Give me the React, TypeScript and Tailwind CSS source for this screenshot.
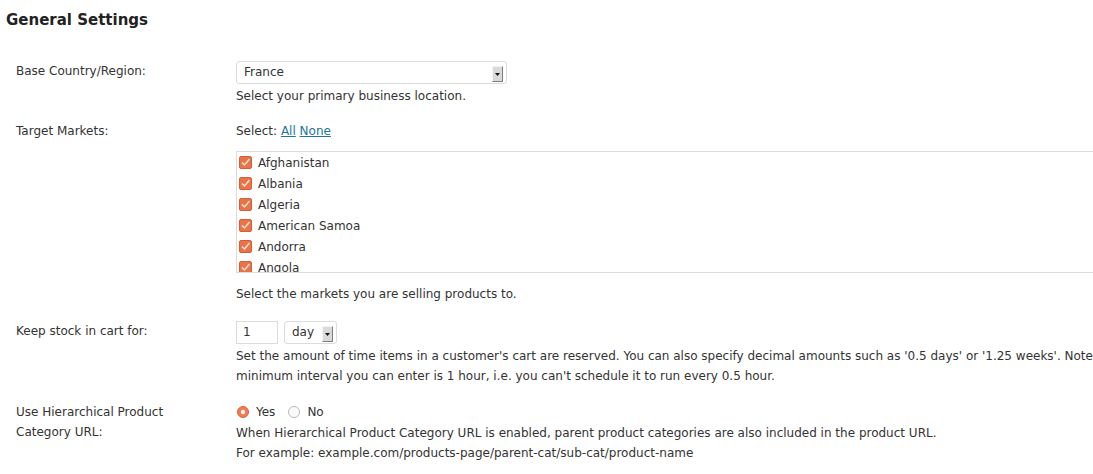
import React from 'react'

const countries = ['Afghanistan', 'Albania', 'Algeria', 'American Samoa', 'Andorra', 'Angola', 'Anguilla', 'Antarctica']

const font = { fontFamily: '"DejaVu Sans", Verdana, sans-serif' }

function SelectArrow() {
  return (
    <span className="absolute right-[3px] top-[4px] flex h-[16px] w-[11px] items-center justify-center border-t border-l border-t-[#f4f4f4] border-l-[#f4f4f4] border-b border-r border-b-[#7d7d7d] border-r-[#7d7d7d] bg-[#d9d9d9]">
      <svg width="5" height="3" viewBox="0 0 5 3">
        <path d="M0 0h5L2.5 3z" fill="#111" />
      </svg>
    </span>
  )
}

function Check() {
  return (
    <svg width="13" height="13" viewBox="0 0 13 13" className="shrink-0">
      <rect x="0.5" y="0.5" width="12" height="12" rx="1.5" fill="#ea7448" stroke="#d0603a" />
      <path d="M3 6.5l2.5 2.5L10.5 3" fill="none" stroke="#fbe2d6" strokeWidth="1.5" />
    </svg>
  )
}

function Radio({ on }: { on?: boolean }) {
  return on ? (
    <svg width="12" height="12" viewBox="0 0 12 12" className="shrink-0">
      <circle cx="6" cy="6" r="5.5" fill="#ef7c52" stroke="#d9643a" />
      <circle cx="6" cy="6" r="2.2" fill="#fff3ee" />
    </svg>
  ) : (
    <svg width="12" height="12" viewBox="0 0 12 12" className="shrink-0">
      <circle cx="6" cy="6" r="5.5" fill="#fafafa" stroke="#b9b9b9" />
    </svg>
  )
}

function Row({ label, children, className = '' }: { label: React.ReactNode; children: React.ReactNode; className?: string }) {
  return (
    <div className={`flex ${className}`}>
      <div className="w-[236px] shrink-0 pl-[16px] leading-[20px]">{label}</div>
      <div className="min-w-0 flex-1">{children}</div>
    </div>
  )
}

export default function App() {
  return (
    <div style={font} className="h-[474px] w-[1093px] overflow-hidden bg-white text-[12px] leading-[20px] text-[#333]">
      <h3 className="pl-[6px] pt-[10px] text-[15px] font-bold leading-[20px] text-[#222]">General Settings</h3>

      <Row label="Base Country/Region:" className="mt-[31px]">
        <div className="relative h-[23px] w-[271px] rounded-[3px] border border-[#dcdcdc] bg-white pl-[7px] leading-[21px]">
          France
          <SelectArrow />
        </div>
        <p className="mt-[2px]">Select your primary business location.</p>
      </Row>

      <Row label="Target Markets:" className="mt-[15px]">
        <p>
          Select: <a className="text-[#21759b] underline">All</a> <a className="text-[#21759b] underline">None</a>
        </p>
        <div className="mt-[10px] h-[122px] w-[900px] overflow-hidden border border-[#dcdcdc] bg-white">
          {countries.map((c) => (
            <div key={c} className="flex h-[21px] items-center gap-[6px] pl-[2px]">
              <Check />
              <span>{c}</span>
            </div>
          ))}
        </div>
        <p className="mt-[11px]">Select the markets you are selling products to.</p>
      </Row>

      <Row label="Keep stock in cart for:" className="mt-[17px]">
        <div className="flex gap-[6px]">
          <div className="h-[23px] w-[42px] border border-[#dcdcdc] pl-[6px] leading-[21px]">1</div>
          <div className="relative h-[23px] w-[53px] rounded-[3px] border border-[#dcdcdc] pl-[7px] leading-[21px]">
            day
            <SelectArrow />
          </div>
        </div>
        <p className="mt-[2px] whitespace-nowrap">
          Set the amount of time items in a customer's cart are reserved. You can also specify decimal amounts such as '0.5 days' or '1.25 weeks'. Note that the
          <br />
          minimum interval you can enter is 1 hour, i.e. you can't schedule it to run every 0.5 hour.
        </p>
      </Row>

      <Row label={<>Use Hierarchical Product<br />Category URL:</>} className="mt-[16px]">
        <div className="flex h-[20px] items-center">
          <span className="ml-[1px] mr-[7px]"><Radio on /></span>
          <span>Yes</span>
          <span className="ml-[13px] mr-[7px]"><Radio /></span>
          <span>No</span>
        </div>
        <p className="mt-[1px]">
          When Hierarchical Product Category URL is enabled, parent product categories are also included in the product URL.
          <br />
          For example: example.com/products-page/parent-cat/sub-cat/product-name
        </p>
      </Row>
    </div>
  )
}
